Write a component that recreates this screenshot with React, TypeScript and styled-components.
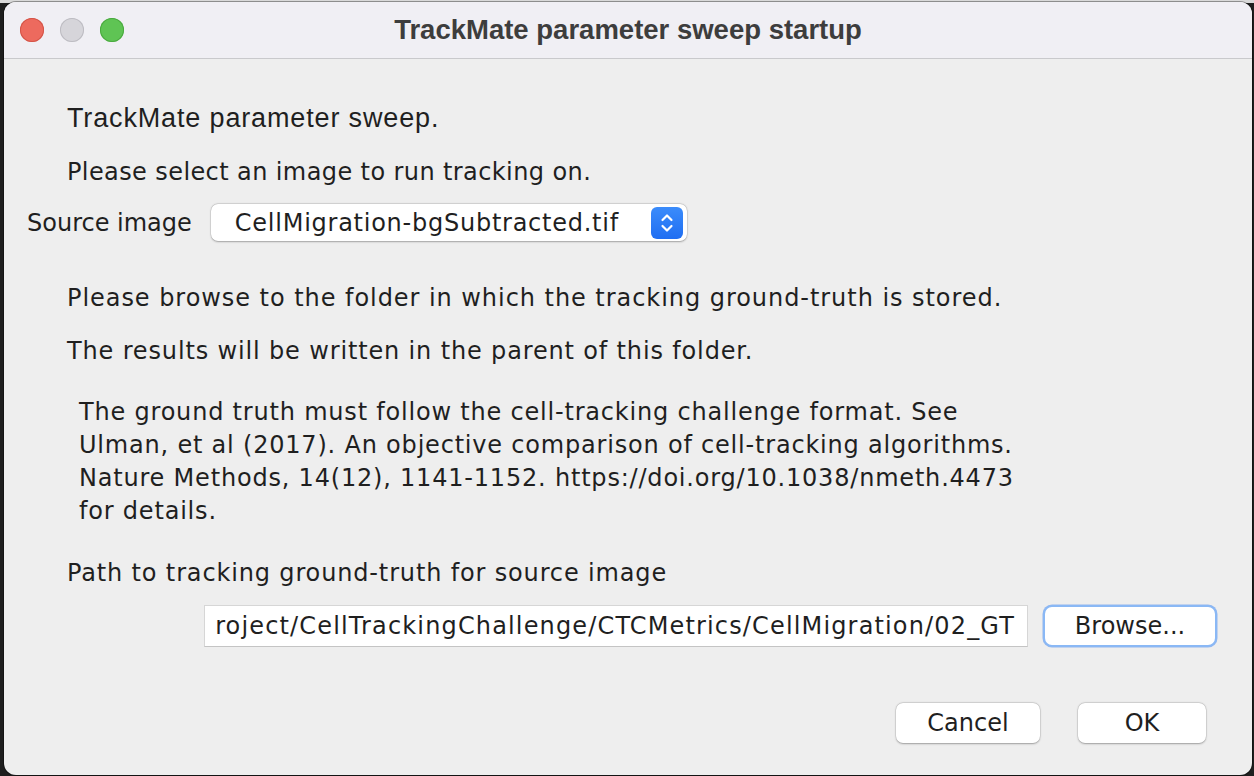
import React from "react";
import styled, { createGlobalStyle } from "styled-components";

const Global = createGlobalStyle`
  html, body { margin: 0; padding: 0; }
  body {
    width: 1254px;
    height: 776px;
    overflow: hidden;
    background: linear-gradient(180deg, #d9d9d9 0px, #d9d9d9 3px, #1e1e1e 3px);
  }
  #root { width: 1254px; height: 776px; }
`;

const Desktop = styled.div`
  width: 1254px;
  height: 776px;
  padding: 2px 2px 1px 4px;
  box-sizing: border-box;
  display: flex;
`;

const Window = styled.div`
  flex: 1;
  display: flex;
  flex-direction: column;
  border-radius: 12px;
  overflow: hidden;
  background: #eeeeee;
  box-shadow: 0 0 0 1px rgba(0, 0, 0, 0.35);
`;

const TitleBar = styled.div`
  height: 56px;
  flex: none;
  background: #f0eff4;
  border-bottom: 1px solid #c9c9cc;
  display: flex;
  align-items: center;
  position: relative;
`;

const Lights = styled.div`
  display: flex;
  gap: 16px;
  padding-left: 16px;
`;

const Light = styled.span<{ $fill: string; $edge: string }>`
  width: 24px;
  height: 24px;
  border-radius: 50%;
  background: ${(p) => p.$fill};
  box-shadow: inset 0 0 0 1px ${(p) => p.$edge};
`;

const Title = styled.div`
  position: absolute;
  left: 0;
  right: 0;
  top: 0;
  bottom: 0;
  display: flex;
  align-items: center;
  justify-content: center;
  font-family: "Liberation Sans", Arial, sans-serif;
  font-weight: bold;
  font-size: 27.5px;
  color: #3d3d3d;
  pointer-events: none;
`;

const Body = styled.div`
  flex: 1;
  display: flex;
  flex-direction: column;
  padding: 44px 0 0 0;
  font-family: "DejaVu Sans", "Liberation Sans", sans-serif;
  color: #1f1f1f;
`;

const Line = styled.div<{ $mt?: number; $ls?: number }>`
  height: 30px;
  line-height: 30px;
  margin-top: ${(p) => p.$mt ?? 0}px;
  padding-left: 63px;
  font-size: 24px;
  letter-spacing: ${(p) => p.$ls ?? 0.85}px;
  white-space: nowrap;
`;

const Heading = styled.div`
  height: 30px;
  line-height: 30px;
  padding-left: 63px;
  font-family: "Liberation Sans", Arial, sans-serif;
  font-size: 27px;
  letter-spacing: 0.85px;
  white-space: nowrap;
`;

const Paragraph = styled.div`
  margin-top: 30px;
  padding-left: 75px;
  font-size: 24px;
  letter-spacing: 0.8px;
  line-height: 33px;
  white-space: nowrap;
`;

const SourceRow = styled.div`
  margin-top: 17px;
  height: 37px;
  display: flex;
  align-items: center;
  padding-left: 23px;
  gap: 19px;
`;

const Label = styled.span`
  font-size: 24px;
  white-space: nowrap;
`;

const Combo = styled.div`
  width: 476px;
  height: 37px;
  box-sizing: border-box;
  background: #ffffff;
  border-radius: 7px;
  box-shadow: 0 0.5px 2px rgba(0, 0, 0, 0.28), 0 0 0 0.5px rgba(0, 0, 0, 0.12);
  display: flex;
  align-items: center;
  justify-content: space-between;
  padding: 0 4px 0 24px;
  font-size: 24px;
  letter-spacing: 0.75px;
  white-space: nowrap;
`;

const Stepper = styled.div`
  width: 32px;
  height: 32px;
  border-radius: 6px;
  background: linear-gradient(180deg, #3b8cfb 0%, #1f6ef2 100%);
  display: flex;
  align-items: center;
  justify-content: center;
`;

const FieldRow = styled.div`
  margin-top: 17px;
  height: 42px;
  display: flex;
  align-items: center;
  padding-left: 200px;
  gap: 15px;
`;

const PathField = styled.div`
  width: 824px;
  height: 42px;
  box-sizing: border-box;
  background: #ffffff;
  border: 1px solid #d6d6d6;
  border-bottom-color: #c4c4c4;
  display: flex;
  align-items: center;
  justify-content: flex-end;
  overflow: hidden;
  padding-right: 12px;
  font-size: 24px;
  letter-spacing: 1.15px;
  white-space: nowrap;
`;

const Button = styled.button<{ $w: number; $focus?: boolean }>`
  width: ${(p) => p.$w}px;
  height: ${(p) => (p.$focus ? 42 : 40)}px;
  box-sizing: border-box;
  background: #ffffff;
  border: ${(p) => (p.$focus ? "2.5px solid #8ab8f5" : "none")};
  border-radius: ${(p) => (p.$focus ? 9 : 7)}px;
  box-shadow: ${(p) =>
    p.$focus
      ? "0 0 0 0.5px rgba(60,130,240,0.5)"
      : "0 0.5px 2px rgba(0,0,0,0.3), 0 0 0 0.5px rgba(0,0,0,0.1)"};
  font-family: "DejaVu Sans", sans-serif;
  font-size: 24px;
  color: #1f1f1f;
  padding: 0;
  display: flex;
  align-items: center;
  justify-content: center;
`;

const ButtonRow = styled.div`
  margin-top: 56px;
  display: flex;
  justify-content: flex-end;
  padding-right: 46px;
  gap: 38px;
`;

function Chevrons() {
  return (
    <svg width="16" height="24" viewBox="0 0 16 24" fill="none">
      <path d="M3.5 9 L8 4.5 L12.5 9" stroke="#fff" strokeWidth="2.2" strokeLinecap="round" strokeLinejoin="round" />
      <path d="M3.5 15 L8 19.5 L12.5 15" stroke="#fff" strokeWidth="2.2" strokeLinecap="round" strokeLinejoin="round" />
    </svg>
  );
}

export default function App() {
  return (
    <>
      <Global />
      <Desktop>
        <Window>
          <TitleBar>
            <Lights>
              <Light $fill="#ed6a5e" $edge="#d35448" />
              <Light $fill="#d6d5da" $edge="#bdbcc2" />
              <Light $fill="#5fc454" $edge="#4aa93f" />
            </Lights>
            <Title>TrackMate parameter sweep startup</Title>
          </TitleBar>
          <Body>
            <Heading>TrackMate parameter sweep.</Heading>
            <Line $mt={24} $ls={0.4}>Please select an image to run tracking on.</Line>
            <SourceRow>
              <Label>Source image</Label>
              <Combo>
                <span>CellMigration-bgSubtracted.tif</span>
                <Stepper>
                  <Chevrons />
                </Stepper>
              </Combo>
            </SourceRow>
            <Line $mt={42} $ls={0.95}>Please browse to the folder in which the tracking ground-truth is stored.</Line>
            <Line $mt={23} $ls={0.85}>The results will be written in the parent of this folder.</Line>
            <Paragraph>
              The ground truth must follow the cell-tracking challenge format. See
              <br />
              Ulman, et al (2017). An objective comparison of cell-tracking algorithms.
              <br />
              Nature Methods, 14(12), 1141-1152. https://doi.org/10.1038/nmeth.4473
              <br />
              for details.
            </Paragraph>
            <Line $mt={30} $ls={0.85}>Path to tracking ground-truth for source image</Line>
            <FieldRow>
              <PathField>roject/CellTrackingChallenge/CTCMetrics/CellMigration/02_GT</PathField>
              <Button $w={174} $focus>Browse...</Button>
            </FieldRow>
            <ButtonRow>
              <Button $w={144}>Cancel</Button>
              <Button $w={128}>OK</Button>
            </ButtonRow>
          </Body>
        </Window>
      </Desktop>
    </>
  );
}
